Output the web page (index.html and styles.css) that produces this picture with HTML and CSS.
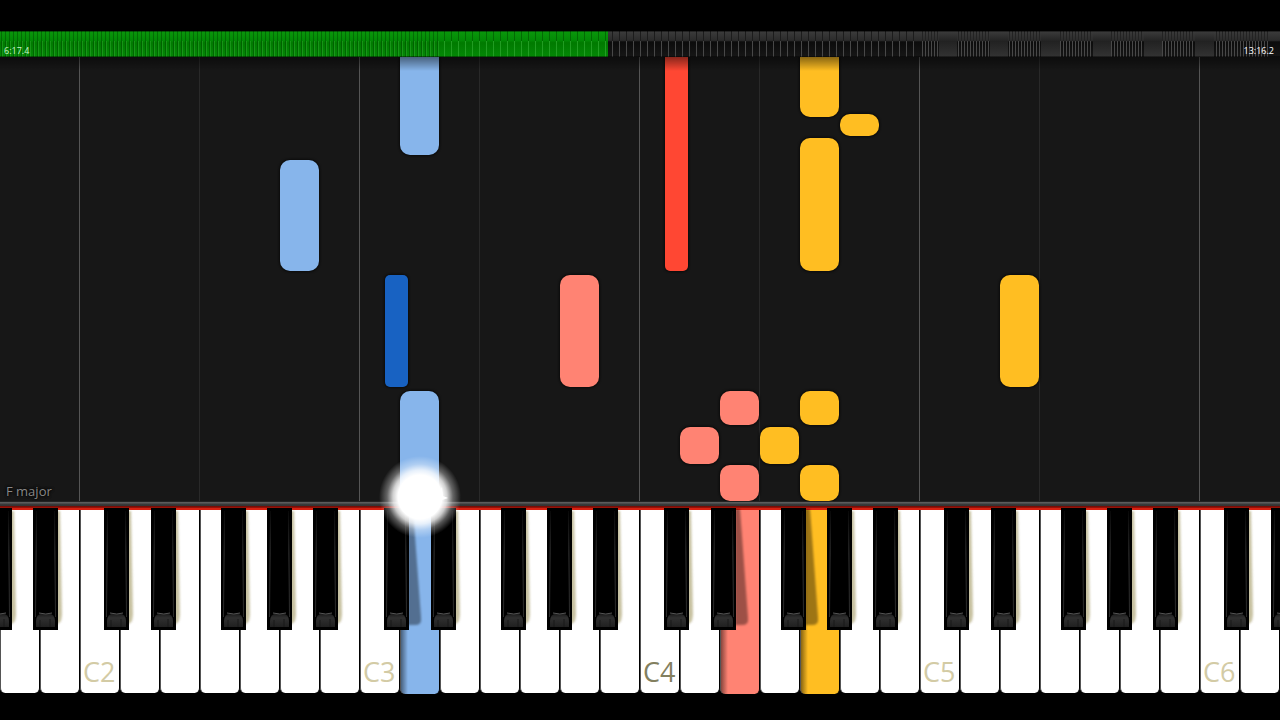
FILE: index.html
```
<!DOCTYPE html>
<html lang="en">
<head>
  <meta charset="UTF-8">
  <meta name="viewport" content="width=device-width, initial-scale=1.0">
  <title>Piano roll</title>
  <link rel="stylesheet" href="styles.css">
  <script defer src="script.js"></script>
</head>

<body>
  <!-- shared shapes for the black keys -->
  <svg width="0" height="0" class="defs" aria-hidden="true">
    <defs>
      <linearGradient id="cap" x1="0" y1="0" x2="0" y2="1">
        <stop offset="0" stop-color="#1c1c1c"/>
        <stop offset=".3" stop-color="#303030"/>
        <stop offset="1" stop-color="#202020"/>
      </linearGradient>
      <linearGradient id="edge" x1="0" y1="0" x2="0" y2="1">
        <stop offset="0" stop-color="#080808"/>
        <stop offset=".4" stop-color="#333"/>
        <stop offset="1" stop-color="#2a2a2a"/>
      </linearGradient>
      <filter id="soft" x="-50%" y="-5%" width="200%" height="110%"><feGaussianBlur stdDeviation="1"/></filter>
      <symbol id="blackKey" viewBox="0 0 25 123" preserveAspectRatio="none" overflow="visible">
        <rect width="25" height="123" fill="#000"/>
        <path d="M3 4 2 110h1L4 4zM22 4l1 106h-1L21 4z" fill="url(#edge)"/>
        <path d="M3 120v-6q0-5 4-7h11q4 2 4 7v6z" fill="url(#cap)"/>
        <path d="M6 106q7 2 13 0" fill="none" stroke="#555"/>
        <path d="M7 113v7M17 112v8" stroke="#181818"/>
      </symbol>
    </defs>
  </svg>

  <header class="timeline">
    <svg class="bars" viewBox="0 0 1280 26" preserveAspectRatio="none" aria-hidden="true">
      <defs>
        <linearGradient id="shine" x1="0" y1="0" x2="0" y2="1">
          <stop offset="0" stop-color="#3c3c3c"/>
          <stop offset=".36" stop-color="#2b2b2b"/>
          <stop offset=".42" stop-color="#0c0c0c"/>
          <stop offset="1" stop-color="#161616"/>
        </linearGradient>
        <linearGradient id="played" x1="0" y1="0" x2="0" y2="1">
          <stop offset="0" stop-color="#0a980c"/>
          <stop offset=".36" stop-color="#038a06"/>
          <stop offset=".45" stop-color="#007a00"/>
          <stop offset="1" stop-color="#048806"/>
        </linearGradient>
        <linearGradient id="block" x1="0" y1="0" x2="0" y2="1">
          <stop offset="0" stop-color="#3c3c3c"/>
          <stop offset=".4" stop-color="#222"/>
          <stop offset="1" stop-color="#333"/>
        </linearGradient>
        <pattern id="greenFine" width="4" height="26" patternUnits="userSpaceOnUse">
          <rect x="1" y="0" width="1" height="26" fill="#004800" opacity=".5"/>
          <rect x="2" y="10" width="1" height="16" fill="#2faa30" opacity=".5"/>
        </pattern>
        <pattern id="greenWide" width="7" height="26" patternUnits="userSpaceOnUse">
          <rect x="3" width="1" height="10" fill="#005c00" opacity=".7"/>
          <rect x="3" y="10" width="1" height="16" fill="#2faa30" opacity=".7"/>
        </pattern>
        <pattern id="wide" width="7" height="26" patternUnits="userSpaceOnUse">
          <rect x="3" width="1" height="10" fill="#1c1c1c"/>
          <rect x="3" y="10" width="1" height="16" fill="#484848"/>
        </pattern>
        <pattern id="dense" width="3" height="26" patternUnits="userSpaceOnUse">
          <rect x="1" width="1" height="10" fill="#232323"/>
          <rect x="1" y="10" width="1" height="16" fill="#484848"/>
        </pattern>
      </defs>
      <rect width="1280" height="26" fill="url(#shine)"/>
      <rect x="608" width="312" height="26" fill="url(#wide)"/>
      <rect x="920" width="350" height="26" fill="url(#dense)"/>
      <path d="M939 0h18v26h-18zM990 0h18v26h-18zM1041 0h19v26h-19zM1093 0h18v26h-18zM1144 0h18v26h-18zM1195 0h19v26h-19z" fill="url(#block)"/>
      <rect width="608" height="26" fill="url(#played)"/>
      <rect width="440" height="26" fill="url(#greenFine)"/>
      <rect x="440" width="168" height="26" fill="url(#greenWide)"/>
      <path d="M0 .5h1280M0 25.5h1280" stroke="#000" opacity=".4"/>
    </svg>
    <time class="now">6:17.4</time>
    <time class="total">13:16.2</time>
  </header>

  <main class="roll" id="roll">
    <span class="scale">F major</span>
  </main>

  <section class="piano">
    <div class="rail"></div>
    <div class="keys" id="keys"></div>
    <div class="spark">
      <svg viewBox="0 0 12 16" aria-hidden="true"><path d="M5 0 6 9 11 11 2 14 0 9z" fill="#fff"/></svg>
    </div>
  </section>
</body>
</html>
```
FILE: styles.css
```
:root {
  --white-keys: 32;
  --unit: calc(100% / var(--white-keys));
  --blue: #87b5eb;
  --deep-blue: #1862c2;
  --salmon: #ff8373;
  --red: #ff4733;
  --amber: #ffbe22;
}
* {box-sizing: border-box;font-family: "Open Sans", "Noto Sans", sans-serif;}
body{margin:0;display:flex;flex-direction:column;min-height:100vh;padding:31px 0 26px;background:#000;overflow-x:hidden;}
.defs{position:absolute;}

/* progress bar */
.timeline{position:relative;height:26px;display:flex;justify-content:space-between;align-items:flex-end;padding:0 6px 0 4px;}
.bars{position:absolute;inset:0;width:100%;height:100%;}
.timeline time{position:relative;font-size:9px;line-height:12px;color:#fff;}
.timeline .now{color:#c8f5c8;}

/* falling notes */
.roll{position:relative;flex:1;min-height:444px;overflow:hidden;background:#171717;}
.roll::after{content:"";position:absolute;inset:0 0 auto;height:14px;background:linear-gradient(#0007,#0000);}
.line{position:absolute;top:0;bottom:0;left:calc(var(--key) * var(--unit) - 1px);width:1px;background:#292929;}
.line.octave{background:#555;}
.note{position:absolute;left:calc(var(--key) * var(--unit));top:var(--top);height:var(--len);width:calc(var(--unit) - 1px);border-radius:10px;box-shadow:0 0 2px 1px #0b0b0b;}
.note.sharp{width:calc(var(--unit) * .6 - 1px);border-radius:5px;}
.scale{position:absolute;left:6px;bottom:1px;font-size:13px;line-height:18px;color:#888;text-shadow:0 0 3px #000,0 0 3px #000;}

.blue{background:var(--blue);}
.deep-blue{background:var(--deep-blue);}
.salmon{background:var(--salmon);}
.red{background:var(--red);}
.amber{background:var(--amber);}

/* keyboard */
.piano{position:relative;}
.rail{height:7px;background:linear-gradient(#222 1px,#5c5c5c 1px,#5c5c5c 2px,#3c3c3c 3px,#333 5px,#6b0a05 5px,#a0160a 7px);}
.keys{display:flex;height:186px;background:linear-gradient(#d81f10 2px,#000 2px);overflow:hidden;}
.key{position:relative;flex:1;}
.key button{padding:0;border:0;cursor:pointer;}
.key .white{display:flex;align-items:flex-end;width:100%;height:183px;margin-top:2px;border:solid #000;border-width:0 1px;border-left-color:#555;border-radius:0 0 5px 5px;background:#fff;}
.white span{padding:0 0 5px 2px;font-size:27px;line-height:32px;color:#d3cba5;}
.white.middle span{color:#83805f;}
.key .white.down{height:184px;background:linear-gradient(90deg,#0007,#0000 7px) var(--tone);}
.white.blue{--tone:var(--blue);}
.white.salmon{--tone:var(--salmon);}
.white.amber{--tone:var(--amber);}
.black{position:absolute;z-index:1;top:-1px;left:calc(var(--shift) * 100%);width:62.5%;height:123px;background:none;}
.black svg{display:block;width:100%;height:100%;overflow:visible;}

/* hit flash */
.spark{position:absolute;z-index:2;left:calc(10.5 * var(--unit) - 42px);top:-46px;width:84px;height:84px;background:radial-gradient(circle,#fff 22px,#fffc 27px,#fff5 33px,#fff0 41px);pointer-events:none;}
.spark svg{position:absolute;right:13px;top:32px;width:12px;height:16px;}
```
FILE: script.js
```
const WHITE_KEYS = 32;

// key is counted in white keys from the left, top and len in px
const notes = [
  { key: 10, top: -20, len: 118, color: 'blue' },
  { key: 7, top: 103, len: 111, color: 'blue' },
  { key: 9.625, top: 218, len: 112, color: 'deep-blue', sharp: true },
  { key: 10, top: 334, len: 130, color: 'blue' },
  { key: 16.625, top: -20, len: 234, color: 'red', sharp: true },
  { key: 14, top: 218, len: 112, color: 'salmon' },
  { key: 18, top: 334, len: 34, color: 'salmon' },
  { key: 17, top: 370, len: 37, color: 'salmon' },
  { key: 18, top: 408, len: 36, color: 'salmon' },
  { key: 20, top: -20, len: 80, color: 'amber' },
  { key: 21, top: 57, len: 22, color: 'amber' },
  { key: 20, top: 81, len: 133, color: 'amber' },
  { key: 25, top: 218, len: 112, color: 'amber' },
  { key: 20, top: 334, len: 34, color: 'amber' },
  { key: 19, top: 370, len: 37, color: 'amber' },
  { key: 20, top: 408, len: 36, color: 'amber' },
];

const pressed = { 10: 'blue', 18: 'salmon', 20: 'amber' };

// offset of the black key from its white key, by name
const shifts = { C: 0.6, D: 0.775, F: 0.525, G: 0.675, A: 0.825 };
const names = ['C', 'D', 'E', 'F', 'G', 'A', 'B'];

const roll = document.getElementById('roll');
const keys = document.getElementById('keys');

function blackKey(shift, shadowOn) {
  const shadow = shadowOn
    ? '<path d="M24 2h5l8 108q1 8-5 8h-8z" fill="#000" opacity=".38" filter="url(#soft)"/>'
    : '<path d="M22 4h5l2 104-1 6-3 3h-3z" fill="#b9b28a" opacity=".8" filter="url(#soft)"/>';
  return `<button class="black" style="--shift:${shift}" aria-label="Black key">
    <svg viewBox="0 0 25 123" preserveAspectRatio="none">${shadow}<use href="#blackKey" width="25" height="123"/></svg>
  </button>`;
}

for (let i = 0; i < WHITE_KEYS; i++) {
  const name = names[(i + 5) % 7];
  const octave = Math.floor((i + 5) / 7) + 1;

  if (i && (name === 'C' || name === 'F')) {
    const line = document.createElement('div');
    line.className = name === 'C' ? 'line octave' : 'line';
    line.style.setProperty('--key', i);
    roll.append(line);
  }

  const key = document.createElement('div');
  key.className = 'key';
  const state = pressed[i] ? ` down ${pressed[i]}` : '';
  const middle = name === 'C' && octave === 4 ? ' middle' : '';
  const label = name === 'C' ? `<span>C${octave}</span>` : '';
  key.innerHTML = `<button class="white${state}${middle}" aria-label="${name}${octave}">${label}</button>`;
  if (i === 0) key.innerHTML += blackKey(-0.325, false);
  if (shifts[name]) key.innerHTML += blackKey(shifts[name], i + 1 in pressed);
  keys.append(key);
}

for (const n of notes) {
  const el = document.createElement('div');
  el.className = `note ${n.color}${n.sharp ? ' sharp' : ''}`;
  el.style.setProperty('--key', n.key);
  el.style.setProperty('--top', `${n.top}px`);
  el.style.setProperty('--len', `${n.len}px`);
  roll.append(el);
}
```
